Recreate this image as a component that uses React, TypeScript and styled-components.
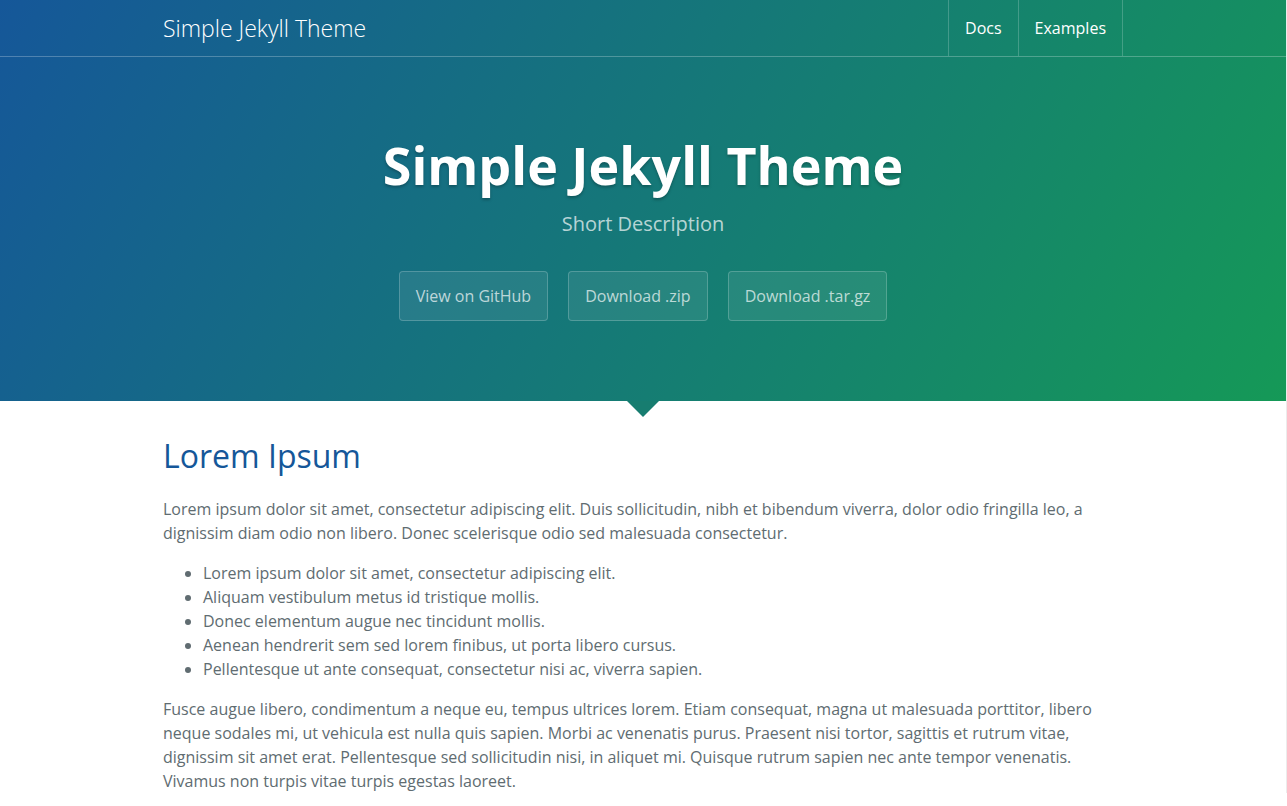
import React from "react";
import styled, { createGlobalStyle } from "styled-components";

const Global = createGlobalStyle`
  html, body { margin: 0; padding: 0; }
  body {
    font-family: "Open Sans", "Noto Sans", sans-serif;
    color: #606c71;
    background: #fff;
  }
  * { box-sizing: border-box; }
`;

const Page = styled.div`
  border-right: 1px solid #ececec;
`;

const Hero = styled.header`
  position: relative;
  background: linear-gradient(120deg, #155799, #159957);
  color: #fff;
  height: 401px;
`;

const Container = styled.div`
  width: 960px;
  margin: 0 auto;
`;

const NavBar = styled.nav`
  border-bottom: 1px solid rgba(255, 255, 255, 0.25);
`;

const NavInner = styled(Container)`
  display: flex;
  align-items: stretch;
  justify-content: space-between;
  height: 56px;
`;

const Brand = styled.a`
  display: flex;
  align-items: center;
  font-size: 23px;
  font-weight: 300;
  color: #fff;
  text-decoration: none;
`;

const NavLinks = styled.ul`
  display: flex;
  list-style: none;
  margin: 0;
  padding: 0;
  border-left: 1px solid rgba(255, 255, 255, 0.2);
`;

const NavItem = styled.li`
  display: flex;
  align-items: center;
  padding: 0 16px;
  border-right: 1px solid rgba(255, 255, 255, 0.2);
  font-size: 16px;
  color: #fff;
`;

const HeroBody = styled.div`
  display: flex;
  flex-direction: column;
  align-items: center;
  padding-top: 73px;
`;

const Title = styled.h1`
  margin: 0;
  font-size: 52px;
  line-height: 70px;
  font-weight: 700;
  color: #fff;
  text-shadow: 0 2px 3px rgba(0, 0, 0, 0.25);
`;

const Tagline = styled.h2`
  margin: 0;
  margin-top: 9px;
  font-size: 20px;
  line-height: 30px;
  font-weight: 400;
  color: rgba(255, 255, 255, 0.7);
`;

const Buttons = styled.div`
  display: flex;
  gap: 20px;
  margin-top: 32px;
`;

const Button = styled.a`
  display: flex;
  align-items: center;
  height: 50px;
  padding: 0 16px;
  font-size: 16px;
  color: rgba(255, 255, 255, 0.7);
  background: rgba(255, 255, 255, 0.08);
  border: 1px solid rgba(255, 255, 255, 0.2);
  border-radius: 4px;
  text-decoration: none;
`;

const Arrow = styled.div`
  position: absolute;
  left: 627px;
  bottom: -16px;
  width: 0;
  height: 0;
  border-left: 16px solid transparent;
  border-right: 16px solid transparent;
  border-top: 16px solid #177d70;
`;

const Main = styled(Container)`
  padding-top: 34px;
`;

const Heading = styled.h2`
  margin: 0 0 20px;
  font-size: 32px;
  line-height: 42px;
  font-weight: 400;
  color: #155799;
`;

const Para = styled.p`
  margin: 0 0 16px;
  font-size: 16px;
  line-height: 24px;
`;

const List = styled.ul`
  margin: 0 0 16px;
  padding-left: 40px;
  font-size: 16px;
  line-height: 24px;
`;

const items = [
  "Lorem ipsum dolor sit amet, consectetur adipiscing elit.",
  "Aliquam vestibulum metus id tristique mollis.",
  "Donec elementum augue nec tincidunt mollis.",
  "Aenean hendrerit sem sed lorem finibus, ut porta libero cursus.",
  "Pellentesque ut ante consequat, consectetur nisi ac, viverra sapien.",
];

export default function App() {
  return (
    <Page>
      <Global />
      <Hero>
        <NavBar>
          <NavInner>
            <Brand href="#">Simple Jekyll Theme</Brand>
            <NavLinks>
              <NavItem>Docs</NavItem>
              <NavItem>Examples</NavItem>
            </NavLinks>
          </NavInner>
        </NavBar>
        <HeroBody>
          <Title>Simple Jekyll Theme</Title>
          <Tagline>Short Description</Tagline>
          <Buttons>
            <Button href="#">View on GitHub</Button>
            <Button href="#">Download .zip</Button>
            <Button href="#">Download .tar.gz</Button>
          </Buttons>
        </HeroBody>
        <Arrow />
      </Hero>
      <Main>
        <Heading>Lorem Ipsum</Heading>
        <Para>
          Lorem ipsum dolor sit amet, consectetur adipiscing elit. Duis sollicitudin, nibh et bibendum viverra, dolor odio fringilla leo, a dignissim diam odio non libero. Donec scelerisque odio sed malesuada consectetur.
        </Para>
        <List>
          {items.map((t) => (
            <li key={t}>{t}</li>
          ))}
        </List>
        <Para>
          Fusce augue libero, condimentum a neque eu, tempus ultrices lorem. Etiam consequat, magna ut malesuada porttitor, libero neque sodales mi, ut vehicula est nulla quis sapien. Morbi ac venenatis purus. Praesent nisi tortor, sagittis et rutrum vitae, dignissim sit amet erat. Pellentesque sed sollicitudin nisi, in aliquet mi. Quisque rutrum sapien nec ante tempor venenatis. Vivamus non turpis vitae turpis egestas laoreet.
        </Para>
      </Main>
    </Page>
  );
}
